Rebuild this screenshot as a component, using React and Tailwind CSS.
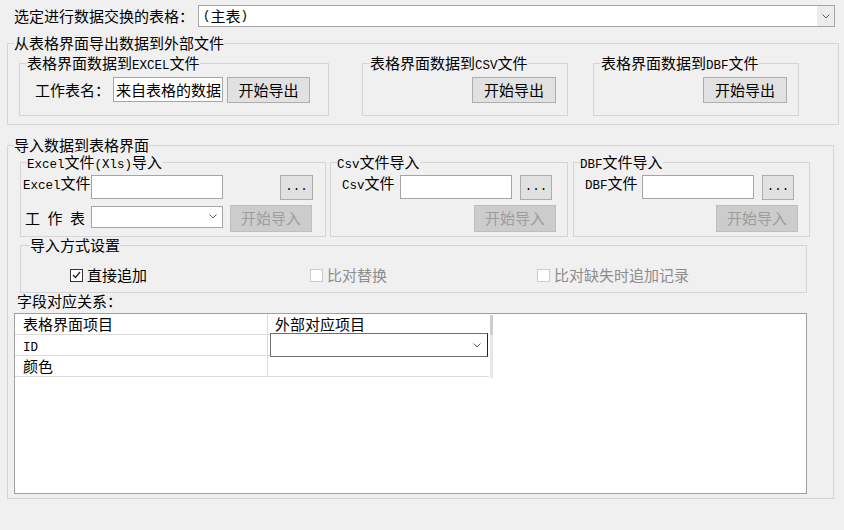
import React from "react";

function Lat({ children }) {
  return (
    <span className="font-['Liberation_Mono',monospace] text-[12.5px] leading-none">
      {children}
    </span>
  );
}

function Chevron({ className = "" }) {
  return (
    <svg width="8" height="5" viewBox="0 0 8 5" className={className}>
      <path d="M0.5 0.5 L4 4 L7.5 0.5" fill="none" stroke="#5f5f5f" strokeWidth="1" />
    </svg>
  );
}

function Group({ title, className = "", legendClass = "ml-[6px]", children }) {
  return (
    <fieldset className={`border border-[#d5d5d5] ${className}`}>
      <legend className={`leading-[16px] ${legendClass}`}>{title}</legend>
      {children}
    </fieldset>
  );
}

function Button({ children, className = "", disabled }) {
  return (
    <div
      className={`flex items-center justify-center border leading-[16px] ${
        disabled
          ? "border-[#bfbfbf] bg-[#cccccc] text-[#9d9d9d]"
          : "border-[#adadad] bg-[#e1e1e1] text-black"
      } ${className}`}
    >
      {children}
    </div>
  );
}

function Input({ className = "", children }) {
  return (
    <div className={`flex items-center border border-[#a5a5a5] bg-white pl-[2px] leading-[16px] ${className}`}>
      {children}
    </div>
  );
}

function Dots() {
  return (
    <Button className="h-[25px] w-[32px]">
      <Lat>...</Lat>
    </Button>
  );
}

function Check({ checked, disabled, label, className = "" }) {
  return (
    <div className={`flex items-center ${className}`}>
      <span
        className={`flex h-[13px] w-[13px] items-center justify-center border bg-white ${
          disabled ? "border-[#cccccc]" : "border-[#333333]"
        }`}
      >
        {checked && (
          <svg width="9" height="8" viewBox="0 0 9 8">
            <path d="M1 4 L3.5 6.5 L8 1" fill="none" stroke="#222" strokeWidth="1.3" />
          </svg>
        )}
      </span>
      <span className={`ml-[4px] leading-[16px] ${disabled ? "text-[#8d8d8d]" : "text-black"}`}>
        {label}
      </span>
    </div>
  );
}

export default function App() {
  return (
    <div className="h-[530px] w-[844px] overflow-hidden bg-[#f0f0f0] font-['Noto_Sans_CJK_SC',sans-serif] text-[15px] text-black">
      {/* Table selector */}
      <div className="flex items-center pl-[14px] pt-[5px]">
        <div className="w-[184px] leading-[16px]">选定进行数据交换的表格：</div>
        <div className="flex h-[22px] w-[637px] items-stretch border border-[#a5a5a5] bg-white">
          <div className="flex flex-1 items-center pl-[4px] leading-[16px]">
            <Lat>(</Lat>主表<Lat>)</Lat>
          </div>
          <div className="flex w-[17px] items-center justify-center bg-[#ececec]">
            <Chevron />
          </div>
        </div>
      </div>

      {/* Export */}
      <Group title="从表格界面导出数据到外部文件" className="ml-[7px] mt-[8px] h-[90px] w-[832px]">
        <div className="mt-[4px] flex">
          <Group
            title={<>表格界面数据到<Lat>EXCEL</Lat>文件</>}
            className="ml-[11px] h-[61px] w-[310px]"
            legendClass="ml-[7px]"
          >
            <div className="mt-[4px] flex items-center pl-[15px]">
              <div className="w-[78px] leading-[16px]">工作表名：</div>
              <Input className="h-[25px] w-[110px]">来自表格的数据</Input>
              <Button className="ml-[4px] h-[26px] w-[83px]">开始导出</Button>
            </div>
          </Group>
          <Group
            title={<>表格界面数据到<Lat>CSV</Lat>文件</>}
            className="ml-[33px] h-[61px] w-[206px]"
            legendClass="ml-[7px]"
          >
            <div className="mt-[4px] flex justify-end pr-[11px]">
              <Button className="h-[26px] w-[84px]">开始导出</Button>
            </div>
          </Group>
          <Group
            title={<>表格界面数据到<Lat>DBF</Lat>文件</>}
            className="ml-[25px] h-[61px] w-[206px]"
            legendClass="ml-[7px]"
          >
            <div className="mt-[4px] flex justify-end pr-[11px]">
              <Button className="h-[26px] w-[84px]">开始导出</Button>
            </div>
          </Group>
        </div>
      </Group>

      {/* Import */}
      <Group title="导入数据到表格界面" className="ml-[7px] mt-[12px] h-[362px] w-[827px]">
        <div className="ml-[12px] mt-[1px] flex">
          <Group
            title={<><Lat>Excel</Lat>文件<Lat>(Xls)</Lat>导入</>}
            className="h-[83px] w-[306px]"
          >
            <div className="mt-[3px] flex items-start pl-[2px]">
              <div className="w-[68px] leading-[16px]">
                <Lat>Excel</Lat>文件
              </div>
              <Input className="h-[24px] w-[132px]" />
              <div className="ml-[57px]">
                <Button className="h-[25px] w-[33px]">
                  <Lat>...</Lat>
                </Button>
              </div>
            </div>
            <div className="mt-[5px] flex items-start pl-[4px]">
              <div className="mt-[5px] w-[66px] leading-[16px]">
                工<Lat> </Lat>作<Lat> </Lat>表
              </div>
              <div className="mt-[1px] flex h-[22px] w-[132px] items-center justify-end border border-[#a5a5a5] bg-white pr-[5px]">
                <Chevron />
              </div>
              <Button disabled className="ml-[7px] h-[27px] w-[82px]">
                开始导入
              </Button>
            </div>
          </Group>

          <Group
            title={<><Lat>Csv</Lat>文件导入</>}
            className="ml-[4px] h-[83px] w-[238px]"
          >
            <div className="mt-[3px] flex items-start pl-[11px]">
              <div className="w-[58px] leading-[16px]">
                <Lat>Csv</Lat>文件
              </div>
              <Input className="h-[24px] w-[112px]" />
              <div className="ml-[8px]">
                <Dots />
              </div>
            </div>
            <div className="mt-[5px] flex justify-end pr-[11px]">
              <Button disabled className="h-[27px] w-[82px]">
                开始导入
              </Button>
            </div>
          </Group>

          <Group
            title={<><Lat>DBF</Lat>文件导入</>}
            className="ml-[5px] h-[83px] w-[237px]"
          >
            <div className="mt-[3px] flex items-start pl-[11px]">
              <div className="w-[57px] leading-[16px]">
                <Lat>DBF</Lat>文件
              </div>
              <Input className="h-[24px] w-[112px]" />
              <div className="ml-[8px]">
                <Dots />
              </div>
            </div>
            <div className="mt-[5px] flex justify-end pr-[11px]">
              <Button disabled className="h-[27px] w-[82px]">
                开始导入
              </Button>
            </div>
          </Group>
        </div>

        {/* Import mode */}
        <Group title="导入方式设置" className="ml-[12px] h-[56px] w-[787px]" legendClass="ml-[9px]">
          <div className="mt-[14px] flex pl-[49px]">
            <Check checked label="直接追加" className="w-[240px]" />
            <Check disabled label="比对替换" className="w-[227px]" />
            <Check disabled label="比对缺失时追加记录" />
          </div>
        </Group>

        <div className="ml-[9px] leading-[16px]">字段对应关系：</div>

        {/* Field mapping grid */}
        <div className="ml-[6px] mt-[4px] flex h-[181px] w-[793px] border border-[#a0a0a0] bg-white">
          <div className="w-[474px]">
            <div className="flex h-[21px] border-b border-[#dcdcdc] leading-[20px]">
              <div className="w-[253px] border-r border-[#dcdcdc] pl-[8px]">表格界面项目</div>
              <div className="flex-1 pl-[7px]">外部对应项目</div>
            </div>
            <div className="flex h-[21px] border-b border-[#dcdcdc] leading-[20px]">
              <div className="w-[253px] border-r border-[#dcdcdc] pl-[8px]">
                <Lat>ID</Lat>
              </div>
              <div className="relative flex-1">
                <div className="absolute left-[2px] top-[-2px] flex h-[24px] w-[218px] items-center justify-end border border-[#6e6e6e] border-r-[#222] border-r-dotted bg-white pr-[6px]">
                  <Chevron />
                </div>
              </div>
            </div>
            <div className="flex h-[21px] border-b border-[#dcdcdc] leading-[20px]">
              <div className="w-[253px] border-r border-[#dcdcdc] pl-[8px]">颜色</div>
              <div className="flex-1" />
            </div>
          </div>
          <div className="ml-[1px] mt-[1px] flex h-[63px] w-[3px] flex-col">
            <div className="h-[20px] bg-[#cdcdcd]" />
            <div className="flex-1 bg-[#e8e8e8]" />
          </div>
        </div>
      </Group>
    </div>
  );
}
